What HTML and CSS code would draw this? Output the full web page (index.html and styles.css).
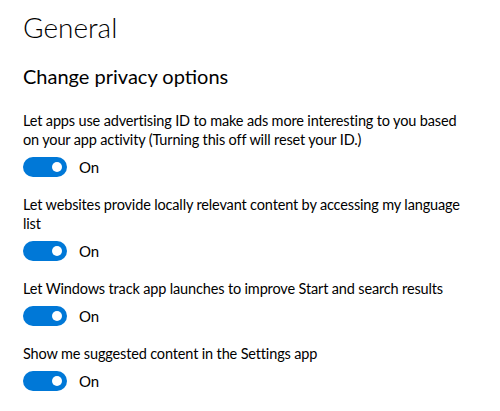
FILE: index.html
```html
<!DOCTYPE html>
<html>
<head>
<meta charset="utf-8">
<link rel="stylesheet" href="styles.css">
</head>
<body>
<main class="page">
  <h1 class="title">General</h1>
  <h2 class="subtitle">Change privacy options</h2>
  <div class="options">
    <section class="option">
      <p class="label">Let apps use advertising ID to make ads more interesting to you based on your app activity (Turning this off will reset your ID.)</p>
      <div class="toggle-row"><span class="toggle"><span class="knob"></span></span><span class="state">On</span></div>
    </section>
    <section class="option">
      <p class="label">Let websites provide locally relevant content by accessing my language list</p>
      <div class="toggle-row"><span class="toggle"><span class="knob"></span></span><span class="state">On</span></div>
    </section>
    <section class="option">
      <p class="label">Let Windows track app launches to improve Start and search results</p>
      <div class="toggle-row"><span class="toggle"><span class="knob"></span></span><span class="state">On</span></div>
    </section>
    <section class="option">
      <p class="label">Show me suggested content in the Settings app</p>
      <div class="toggle-row"><span class="toggle"><span class="knob"></span></span><span class="state">On</span></div>
    </section>
  </div>
</main>
</body>
</html>
```
FILE: styles.css
```css
html, body {
  margin: 0;
  padding: 0;
  background: #ffffff;
}
body {
  font-family: "Lato", "Open Sans", sans-serif;
  color: #000000;
}
.page {
  padding: 0 0 0 23px;
  width: 446px;
}
.title {
  margin: 7px 0 0 0;
  font-size: 28px;
  font-weight: 300;
  line-height: 40px;
}
.subtitle {
  margin: 15px 0 0 0;
  font-size: 20px;
  font-weight: 400;
  line-height: 28px;
}
.options {
  display: flex;
  flex-direction: column;
  gap: 18px;
  margin-top: 21px;
}
.label {
  margin: 0;
  font-size: 14.5px;
  letter-spacing: -0.15px;
  line-height: 19px;
}
.toggle-row {
  display: flex;
  align-items: center;
  margin-top: 8px;
  gap: 12px;
}
.toggle {
  width: 44px;
  height: 20px;
  border-radius: 10px;
  background: #0078d7;
  display: flex;
  align-items: center;
  justify-content: flex-end;
  padding-right: 5px;
  box-sizing: border-box;
}
.knob {
  width: 10px;
  height: 10px;
  border-radius: 50%;
  background: #ffffff;
}
.state {
  font-size: 15px;
  line-height: 20px;
}
```
